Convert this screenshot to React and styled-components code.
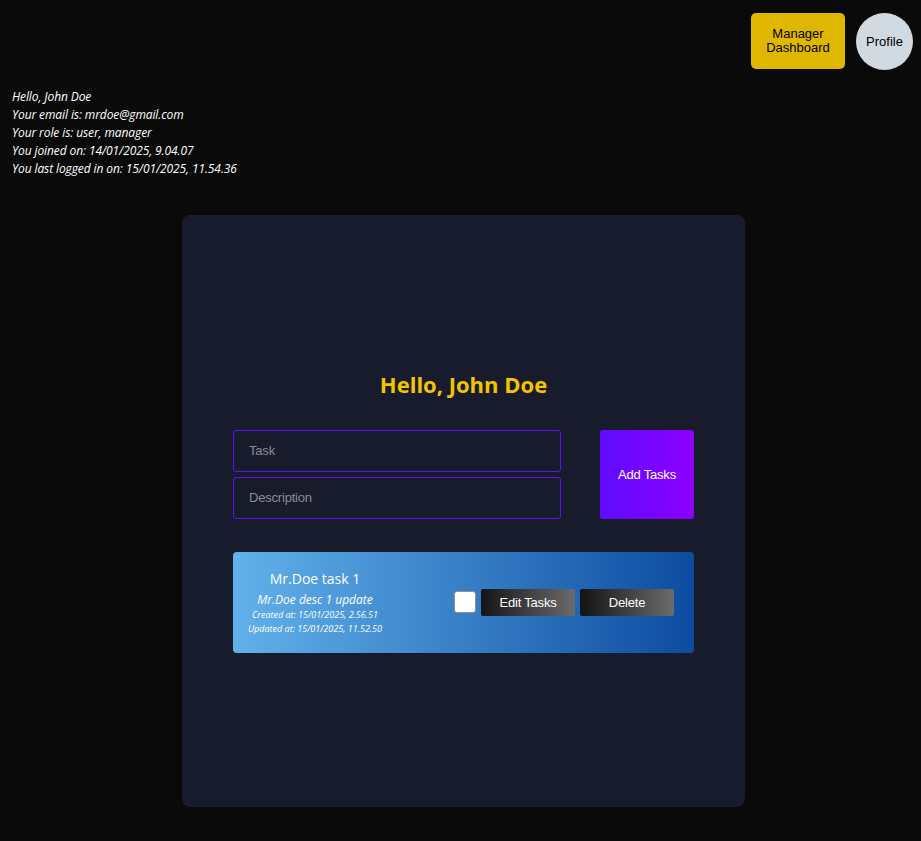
import styled, { createGlobalStyle } from "styled-components";

const GlobalStyle = createGlobalStyle`
  body {
    margin: 0;
    background: #0a0a0a;
    font-family: "Open Sans", "Noto Sans", sans-serif;
  }
`;

function App() {
  return (
    <Page>
      <GlobalStyle />
      <TopBar>
        <DashboardButton>Manager Dashboard</DashboardButton>
        <ProfileButton>Profile</ProfileButton>
      </TopBar>

      <UserInfo>
        <p>Hello, John Doe</p>
        <p>Your email is: mrdoe@gmail.com</p>
        <p>Your role is: user, manager</p>
        <p>You joined on: 14/01/2025, 9.04.07</p>
        <p>You last logged in on: 15/01/2025, 11.54.36</p>
      </UserInfo>

      <Card>
        <Heading>Hello, John Doe</Heading>
        <TaskForm>
          <Inputs>
            <Input placeholder="Task" />
            <Input placeholder="Description" />
          </Inputs>
          <AddButton>Add Tasks</AddButton>
        </TaskForm>

        <TaskItem>
          <TaskText>
            <TaskTitle>Mr.Doe task 1</TaskTitle>
            <TaskDesc>Mr.Doe desc 1 update</TaskDesc>
            <TaskDate>Created at: 15/01/2025, 2.56.51</TaskDate>
            <TaskDate>Updated at: 15/01/2025, 11.52.50</TaskDate>
          </TaskText>
          <TaskActions>
            <Check type="checkbox" />
            <DarkButton>Edit Tasks</DarkButton>
            <DarkButton>Delete</DarkButton>
          </TaskActions>
        </TaskItem>
      </Card>
    </Page>
  );
}
export default App;

const Page = styled.div`
  min-height: 841px;
  padding-bottom: 33px;
  box-sizing: border-box;
`;

const TopBar = styled.div`
  display: flex;
  justify-content: flex-end;
  gap: 11px;
  padding: 13px 8px 0 0;
`;

const DashboardButton = styled.button`
  width: 94px;
  height: 56px;
  border: none;
  border-radius: 5px;
  background: #e0b700;
  color: #000;
  font-family: "Liberation Sans", Arial, sans-serif;
  font-size: 13px;
  line-height: 14px;
  padding: 0 8px;
`;

const ProfileButton = styled.button`
  width: 57px;
  height: 57px;
  border: none;
  border-radius: 50%;
  background: #d1d9e1;
  color: #000;
  font-family: "Liberation Sans", Arial, sans-serif;
  font-size: 13px;
  padding: 0;
`;

const UserInfo = styled.div`
  margin: 18px 0 0 12px;
  color: #fff;
  font-style: italic;
  font-size: 12px;
  letter-spacing: -0.1px;
  line-height: 18px;

  p {
    margin: 0;
  }
`;

const Card = styled.div`
  width: 563px;
  height: 592px;
  margin: 37px 0 0 182px;
  box-sizing: border-box;
  padding: 0 51px;
  background: #181b2c;
  border-radius: 8px;
  display: flex;
  flex-direction: column;
  justify-content: center;
`;

const Heading = styled.h1`
  margin: 0 0 32px;
  text-align: center;
  color: #f5c400;
  font-size: 22px;
  font-weight: 700;
  line-height: 28px;
`;

const TaskForm = styled.div`
  display: flex;
  justify-content: space-between;
  align-items: stretch;
`;

const Inputs = styled.div`
  width: 328px;
  display: flex;
  flex-direction: column;
  gap: 5px;
`;

const Input = styled.input`
  height: 42px;
  box-sizing: border-box;
  border: 1px solid #5a12f5;
  border-radius: 3px;
  background: transparent;
  padding: 0 15px;
  color: #fff;
  font-family: "Liberation Sans", Arial, sans-serif;
  font-size: 13px;
  letter-spacing: -0.2px;
  outline: none;

  &::placeholder {
    color: #8a8d96;
  }
`;

const AddButton = styled.button`
  width: 94px;
  border: none;
  border-radius: 3px;
  background: linear-gradient(to right, #5f0cff, #8c00ff);
  color: #fff;
  font-family: "Liberation Sans", Arial, sans-serif;
  font-size: 13px;
  letter-spacing: -0.2px;
`;

const TaskItem = styled.div`
  margin-top: 33px;
  height: 101px;
  box-sizing: border-box;
  padding: 0 20px 0 15px;
  border-radius: 4px;
  background: linear-gradient(to right, #62b1eb, #0d4ca0);
  display: flex;
  align-items: center;
  justify-content: space-between;
`;

const TaskText = styled.div`
  display: flex;
  flex-direction: column;
  align-items: center;
  color: #fff;
  text-align: center;
`;

const TaskTitle = styled.div`
  font-size: 14px;
  line-height: 20px;
  margin-bottom: 2px;
`;

const TaskDesc = styled.div`
  font-size: 12px;
  font-style: italic;
  line-height: 17px;
`;

const TaskDate = styled.div`
  font-size: 9px;
  font-style: italic;
  line-height: 14px;
`;

const TaskActions = styled.div`
  display: flex;
  align-items: center;
  gap: 5px;
`;

const Check = styled.input`
  appearance: none;
  width: 22px;
  height: 22px;
  margin: 0;
  box-sizing: border-box;
  border: 1px solid #8a8f99;
  border-radius: 3px;
  background: #fff;
`;

const DarkButton = styled.button`
  width: 94px;
  height: 27px;
  border: none;
  border-radius: 2px;
  background: linear-gradient(to right, #141414, #6b6b6b);
  color: #fff;
  font-family: "Liberation Sans", Arial, sans-serif;
  font-size: 13px;
  letter-spacing: -0.2px;
`;
